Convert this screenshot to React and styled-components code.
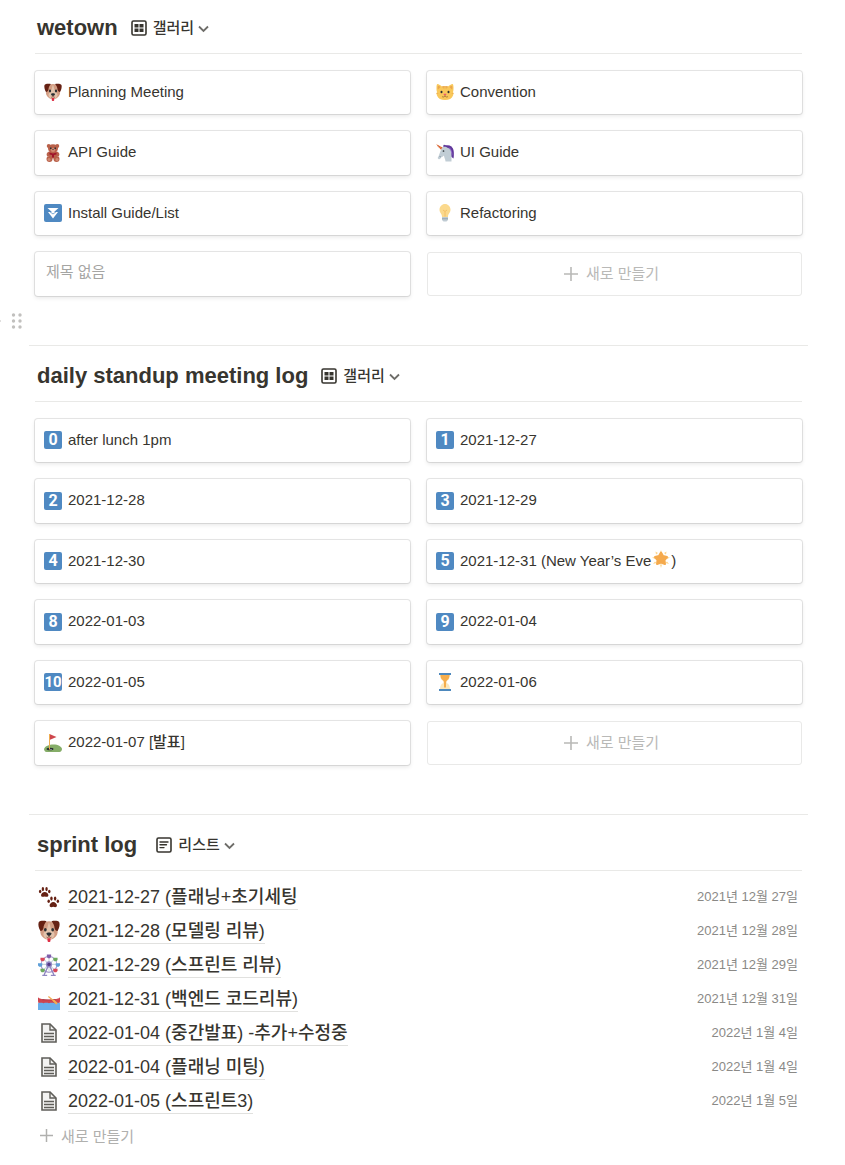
import React from "react";
import styled, { createGlobalStyle } from "styled-components";

const GlobalStyle = createGlobalStyle`
  *, *::before, *::after { box-sizing: border-box; }
  body {
    margin: 0;
    background: #fff;
    color: #37352f;
    font-family: "Liberation Sans", "Noto Sans CJK KR", sans-serif;
    font-size: 15px;
    overflow-x: hidden;
  }
  button { font: inherit; color: inherit; background: none; border: 0; padding: 0; cursor: pointer; }
  a { color: inherit; text-decoration: none; }
  svg { display: block; flex: none; }
`;

const Page = styled.main`
  padding: 0 37px 20px 29px;
`;

const Section = styled.section`
  padding: ${(p) => (p.$first ? "14px" : "16px")} 6px 0;
`;

const Divider = styled.hr`
  height: 1px;
  margin: 0;
  border: 0;
  background: #e9e9e7;
`;

const Header = styled.header`
  display: flex;
  align-items: center;
  gap: 13px;
  padding: 0 2px 11px;
  border-bottom: 1px solid #e9e9e7;
`;

const Title = styled.h2`
  margin: 0;
  font-size: 22px;
  line-height: 28px;
  font-weight: 700;
  white-space: pre;
`;

const ViewButton = styled.button`
  display: flex;
  align-items: center;
  font-weight: 500;
  line-height: 22px;
`;

const ViewName = styled.span`
  margin: 0 4px 0 6px;
`;

const Gallery = styled.div`
  display: grid;
  grid-template-columns: 1fr 1fr;
  grid-auto-rows: minmax(43px, auto) minmax(44px, auto);
  gap: 17px;
  margin-top: 17px;
`;

const Card = styled.a`
  display: flex;
  align-items: center;
  gap: 6px;
  padding: 0 9px 1px;
  border-radius: 3px;
  background: #fff;
  box-shadow: 0 0 0 1px rgba(15, 15, 15, 0.1), 0 2px 4px rgba(15, 15, 15, 0.1);
`;

const CardTitle = styled.span`
  display: flex;
  gap: 1px;
  padding-bottom: 1px;
  line-height: 22px;
  font-weight: 500;
`;

const Untitled = styled(CardTitle)`
  padding: 0 2px 3px;
  color: #a5a5a3;
  font-weight: 400;
`;

const NewCard = styled.button`
  display: flex;
  align-items: center;
  justify-content: center;
  gap: 8px;
  padding-right: 6px;
  border: 1px solid #e9e9e8;
  border-radius: 3px;
  color: #b9b9b7;
  line-height: 22px;
`;

const Keycap = styled.span`
  display: flex;
  justify-content: center;
  flex: none;
  width: 18px;
  height: 18px;
  border-radius: 2px;
  background: #4f89c2;
  color: #fff;
  font-family: Roboto, "Liberation Sans", sans-serif;
  font-size: ${(p) => (p.$wide ? "15px" : "16px")};
  font-weight: 700;
  line-height: 18px;
`;

const BlockGap = styled.div`
  display: flex;
  align-items: center;
  gap: 10px;
  height: 49px;
  margin-left: -38px;
  color: #c1c0be;
`;

const HandleButton = styled.button`
  display: flex;
`;

const List = styled.ul`
  list-style: none;
  margin: 9px 0 0;
  padding: 0;
`;

const ListRow = styled.li`
  display: flex;
  align-items: center;
  gap: 8px;
  height: 34px;
  padding: 0 4px 0 3px;
`;

const ListLink = styled.a`
  font-size: 18px;
  line-height: 24px;
  height: 25px;
  font-weight: 500;
  white-space: nowrap;
  border-bottom: 1px solid #e1e1df;
`;

const ListDate = styled.time`
  margin-left: auto;
  font-size: 13px;
  line-height: 20px;
  color: #8a8986;
  white-space: nowrap;
`;

const NewRow = styled.button`
  display: flex;
  align-items: center;
  gap: 8px;
  height: 34px;
  padding: 0 5px;
  color: #b0b0ae;
`;

const Svg = ({ size = 18, children, ...rest }) => (
  <svg width={size} height={size} viewBox="0 0 36 36" aria-hidden="true" {...rest}>
    {children}
  </svg>
);

const Dog = (p) => (
  <Svg {...p}>
    <path fill="#d29c82" d="M18 2C9 2 5 8 4 16c-1 6 1 10 5 13 2 2 5 3 9 3s7-1 9-3c4-3 6-7 5-13-1-8-5-14-14-14z" />
    <path fill="#e2c3ac" d="M18 4c-1 0-2 8-4 12-2 2-6 5-5 9 1 4 5 7 9 7s8-3 9-7c1-4-3-7-5-9-2-4-3-12-4-12z" />
    <path fill="#662113" d="M14 2C9 1 3 1 1 4c-1 4 0 9 3 14 3 0 4-2 5-5 0-4 2-8 5-11zM22 2c5-1 11-1 13 2 1 4 0 9-3 14-3 0-4-2-5-5 0-4-2-8-5-11z" />
    <ellipse cx="12" cy="16" rx="2.200" ry="2.800" fill="#292f33" />
    <ellipse cx="24" cy="16" rx="2.200" ry="2.800" fill="#292f33" />
    <path fill="#292f33" d="M14 22c0-2 8-2 8 0 0 2-2.500 4-4 4s-4-2-4-4z" />
    <path d="M18 25v3m-4 0c2 1 3 1 4-1 1 2 2 2 4 1" fill="none" stroke="#7b3b2b" strokeWidth="1.200" />
    <path fill="#dd2e44" d="M15.500 30h5v3c0 2-1 3-2.500 3s-2.500-1-2.500-3z" />
  </Svg>
);

const Cat = (p) => (
  <Svg {...p}>
    <path fill="#f9c85b" d="M3 2c-1 0-2 2-2 7 0 4 0 6 1 9-1 2-1 4 0 7 2 6 8 9 16 9s14-3 16-9c1-3 1-5 0-7 1-3 1-5 1-9 0-5-1-7-2-7-2 0-7 3-9 5-3-1-9-1-12 0C10 5 5 2 3 2z" />
    <path fill="#e9a54f" d="M4 6c-1 2-1 5 0 7l5-5C8 7 6 6 4 6zm28 0c1 2 1 5 0 7l-5-5c1-1 3-2 5-2zM16.500 6h3L18 13zM12 7l3 5 1-6zM24 7l-3 5-1-6zM1 20l5 1-5 1zm34 0-5 1 5 1z" />
    <ellipse cx="11" cy="18" rx="2" ry="2.500" fill="#292f33" />
    <ellipse cx="25" cy="18" rx="2" ry="2.500" fill="#292f33" />
    <path fill="#e75a70" d="M15 22c1-1 5-1 6 0 0 1-2 3-3 3s-3-2-3-3z" />
    <path d="M18 25c0 3-4 4-6 2m6-2c0 3 4 4 6 2" fill="none" stroke="#8a5a2c" strokeWidth="1.300" />
  </Svg>
);

const Bear = (p) => (
  <Svg {...p}>
    <g fill="#b9614a">
      <circle cx="9.500" cy="4" r="4" />
      <circle cx="26.500" cy="4" r="4" />
      <ellipse cx="18" cy="9" rx="10" ry="8.500" />
      <path d="M10 15c-4 1-6 5-4 9 1 1 3 1 4 0v5h16v-5c1 1 3 1 4 0 2-4 0-8-4-9z" />
      <circle cx="11" cy="30" r="6" />
      <circle cx="25" cy="30" r="6" />
    </g>
    <g fill="#d08a72">
      <ellipse cx="18" cy="12" rx="4.500" ry="4" />
      <circle cx="10" cy="31" r="3" />
      <circle cx="26" cy="31" r="3" />
    </g>
    <path fill="#a0142a" d="M11 17l7 2 7-2v4l-5 1v5h-4v-5l-5-1z" />
    <path fill="#292f33" d="M12 7h3v3h-3zm9 0h3v3h-3zm-5 3h4l-2 2z" />
  </Svg>
);

const Unicorn = (p) => (
  <Svg {...p}>
    <path fill="#60379a" d="M17 4c8-4 16 0 18 8 1 5 1 11 0 17l-4-3-14-17z" />
    <path fill="#9268ca" d="M26 6c4 3 7 9 7 17l-3-6z" />
    <path fill="#ee7842" d="M0 0l15 8-4 5z" />
    <path d="M4 2v3m3-1-1 3m5-1-2 4" stroke="#b8522e" strokeWidth="1.200" />
    <path fill="#c1cdd5" d="M14 6l2-6 5 6c7 2 10 8 10 17v12H19c0-4-3-8-3-12-2 2-4 3-6 4-1 3-3 4-5 3-2-1-2-3 0-5l4-11c1-4 3-6 5-8z" />
    <path fill="#60379a" d="M15 2c5-1 10 2 11 7-4-3-8-4-11-3z" />
    <circle cx="15" cy="14" r="1.700" fill="#292f33" />
    <path d="M7 25l3 1" stroke="#758795" strokeWidth="1.400" />
  </Svg>
);

const FastDown = (p) => (
  <Svg {...p}>
    <rect width="36" height="36" rx="4" fill="#4f89c2" />
    <path fill="#fff" d="M7 8h22L18 18zM8 16h20L18 29z" />
    <path d="M8 15l3 0 7 5 7-5 3 0" fill="none" stroke="#4f89c2" strokeWidth="1.500" />
  </Svg>
);

const Bulb = (p) => (
  <Svg {...p}>
    <path fill="#fbd98d" d="M29 11C29 5 24 0 18 0S7 5 7 11c0 7 5 8 5 15h12c0-7 5-8 5-15z" />
    <path d="M18 25V15l-4-3m4 3 4-3" fill="none" stroke="#f3bd62" strokeWidth="1.800" />
    <path fill="#bfcbd3" d="M12 26h12v6l-3 3h-6l-3-3z" />
    <path d="M12 29.500h12" stroke="#8899a6" strokeWidth="1.500" />
  </Svg>
);

const GlowStar = (p) => (
  <Svg {...p}>
    <path fill="#fbd58c" d="M18 0l2 6h-4zM29 3l-1 6-4-3zM36 15l-6 3-1-4zM34 28l-7-2 3-3zM18 36l-2-7h4zM2 28l4-5 3 3zM0 15l7-1-1 4zM7 3l5 3-4 3z" />
    <path fill="#f5aa4d" d="M18 5l4 7 8 2-5 6 1 8-8-3-8 3 1-8-5-6 8-2z" stroke="#f5aa4d" strokeWidth="4" strokeLinejoin="round" />
  </Svg>
);

const Hourglass = (p) => (
  <Svg {...p}>
    <path fill="#fbe7ba" d="M21 18c0-2 3.200-3.400 5-6 2-3 2-10 2-10H8s0 7 2 10c1.800 2.600 5 4 5 6s-3.200 3.400-5 6c-2 3-2 10-2 10h20s0-7-2-10c-1.800-2.600-5-4-5-6z" />
    <path fill="#f5ad4c" d="M9 4h18c0 3-1 6-2 8-2 2-5 3.500-5 7v10h-4V19c0-3.500-3-5-5-7-1-2-2-5-2-8z" />
    <path fill="#4d88bd" d="M6 0h24v4H6zM6 32h24v4H6z" />
  </Svg>
);

const Golf = (p) => (
  <Svg {...p}>
    <path fill="#85ad68" d="M0 30c2-6 10-9 19-9s16 4 17 9c0 3-2 6-5 6H5c-3 0-5-3-5-6z" />
    <ellipse cx="12" cy="30" rx="7" ry="2.500" fill="#292f33" />
    <path fill="#ce464c" d="M11 0l14 6-14 6z" />
    <path fill="#efac52" d="M10 0h2v31h-2z" />
    <circle cx="14" cy="31" r="1.200" fill="#e8ecee" />
  </Svg>
);

const Paws = (p) => (
  <Svg {...p}>
    <g fill="#662113">
      <path d="M11 10c3 0 6 3 6 5 0 3-3 3-6 2-3 1-6 1-6-2 0-2 3-5 6-5z" />
      <ellipse cx="3.500" cy="9" rx="2" ry="3" />
      <ellipse cx="8" cy="5" rx="2" ry="3.500" />
      <ellipse cx="14" cy="5" rx="2" ry="3.500" />
      <ellipse cx="18.500" cy="9" rx="2" ry="3" />
      <path d="M25 26c3 0 6 3 6 6s-3 3-6 2c-3 1-6 1-6-2s3-6 6-6z" />
      <ellipse cx="17.500" cy="25" rx="2" ry="3" />
      <ellipse cx="22" cy="20.500" rx="2" ry="3.500" />
      <ellipse cx="28" cy="20.500" rx="2" ry="3.500" />
      <ellipse cx="32.500" cy="25" rx="2" ry="3" />
    </g>
  </Svg>
);

const Ferris = (p) => (
  <Svg {...p}>
    <circle cx="18" cy="17" r="13" fill="none" stroke="#a99bd0" strokeWidth="1.800" />
    <path d="M18 4v26M5 17h26M9 8l18 18M27 8 9 26" stroke="#ccd6dd" strokeWidth="1.800" />
    <path d="M18 17 10 34M18 17l8 17M7 35h8m6 0h8" stroke="#8f86c0" strokeWidth="2.200" />
    <circle cx="18" cy="17" r="5" fill="#9287c4" />
    <circle cx="18" cy="17" r="2.800" fill="#553986" />
    <g fill="#5e9fd8">
      <path d="M0 15h7v4l-2 2H2l-2-2zM29 15h7v4l-2 2h-3l-2-2z" />
    </g>
    <g fill="#8060aa">
      <path d="M14.500 1h7v4l-2 2h-3l-2-2z" />
    </g>
    <g fill="#d84759">
      <path d="M4 6h7v4l-2 2H6l-2-2zM25 24h7v4l-2 2h-3l-2-2z" />
    </g>
    <g fill="#6daa5d">
      <path d="M25 6h7v4l-2 2h-3l-2-2zM4 24h7v4l-2 2H6l-2-2z" />
    </g>
  </Svg>
);

const Canoe = (p) => (
  <Svg {...p}>
    <path fill="#cf454e" d="M0 15c3 3 10 4 18 4s15-1 18-4c1 4 0 8-2 12H2C0 23-1 19 0 15z" />
    <path fill="#a73442" d="M7 18c7 1.500 15 1.500 22 0v2H7z" />
    <path fill="#69aeea" d="M0 25c3-1 6-1 9 0 3-1 6-1 9 0 3-1 6-1 9 0 3-1 6-1 9 0v11H0z" />
    <path d="M17 14l11 9" stroke="#f1ac50" strokeWidth="2" />
    <path d="M26 21l4 4" stroke="#f1ac50" strokeWidth="3.500" strokeLinecap="round" />
  </Svg>
);

const Doc = () => (
  <svg width="22" height="22" viewBox="0 0 22 22" fill="none" stroke="#5f5e59" aria-hidden="true">
    <path d="M4 2h8l6 6v12H4z" fill="#f3f3f2" strokeWidth="1.600" />
    <path d="M12 2v6h6" strokeWidth="1.400" />
    <path d="M6 11.500h10M6 14.500h10M6 17.500h10" strokeWidth="1.300" />
  </svg>
);

const GalleryIcon = () => (
  <svg width="16" height="16" viewBox="0 0 16 16" aria-hidden="true">
    <rect x="1" y="1" width="14" height="14" rx="1.500" fill="none" stroke="#37352f" strokeWidth="1.600" />
    <path fill="#37352f" d="M3.500 4h4v3.500h-4zM8.500 4h4v3.500h-4zM3.500 8.500h4V12h-4zM8.500 8.500h4V12h-4z" />
  </svg>
);

const ListIcon = () => (
  <svg width="16" height="16" viewBox="0 0 16 16" fill="none" stroke="#37352f" aria-hidden="true">
    <rect x="1" y="1" width="14" height="14" rx="1.500" strokeWidth="1.600" />
    <path d="M4 5h8M4 7.800h6.500M4 10.600h4" strokeWidth="1.400" strokeLinecap="round" />
  </svg>
);

const Chevron = () => (
  <svg width="11" height="11" viewBox="0 0 11 11" fill="none" stroke="#6e6d69" aria-hidden="true">
    <path d="M1 3.500l4.500 4.500L10 3.500" strokeWidth="1.800" />
  </svg>
);

const Plus = ({ size = 14 }) => (
  <svg width={size} height={size} viewBox="0 0 14 14" fill="none" stroke="currentColor" aria-hidden="true">
    <path d="M7 0v14M0 7h14" strokeWidth="1.600" />
  </svg>
);

const Grip = () => (
  <svg width="12" height="16" viewBox="0 0 12 16" fill="currentColor" aria-hidden="true">
    {[2, 8, 14].map((y) => (
      <React.Fragment key={y}>
        <circle cx="2.500" cy={y} r="1.700" />
        <circle cx="9" cy={y} r="1.700" />
      </React.Fragment>
    ))}
  </svg>
);

const digit = (label) => <Keycap $wide={label.length > 1}>{label}</Keycap>;

const guides = [
  { icon: <Dog />, title: "Planning Meeting" },
  { icon: <Cat />, title: "Convention" },
  { icon: <Bear />, title: "API Guide" },
  { icon: <Unicorn />, title: "UI Guide" },
  { icon: <FastDown />, title: "Install Guide/List" },
  { icon: <Bulb />, title: "Refactoring" },
  { title: null },
];

const standups = [
  { icon: digit("0"), title: "after lunch 1pm" },
  { icon: digit("1"), title: "2021-12-27" },
  { icon: digit("2"), title: "2021-12-28" },
  { icon: digit("3"), title: "2021-12-29" },
  { icon: digit("4"), title: "2021-12-30" },
  { icon: digit("5"), title: <>2021-12-31 (New Year’s Eve<GlowStar />)</> },
  { icon: digit("8"), title: "2022-01-03" },
  { icon: digit("9"), title: "2022-01-04" },
  { icon: digit("10"), title: "2022-01-05" },
  { icon: <Hourglass />, title: "2022-01-06" },
  { icon: <Golf />, title: "2022-01-07 [발표]" },
];

const sprints = [
  { icon: <Paws size={22} />, title: "2021-12-27 (플래닝+초기세팅", date: "2021년 12월 27일" },
  { icon: <Dog size={22} />, title: "2021-12-28 (모델링 리뷰)", date: "2021년 12월 28일" },
  { icon: <Ferris size={22} />, title: "2021-12-29 (스프린트 리뷰)", date: "2021년 12월 29일" },
  { icon: <Canoe size={22} />, title: "2021-12-31 (백엔드 코드리뷰)", date: "2021년 12월 31일" },
  { icon: <Doc />, title: "2022-01-04 (중간발표) -추가+수정중", date: "2022년 1월 4일" },
  { icon: <Doc />, title: "2022-01-04 (플래닝 미팅)", date: "2022년 1월 4일" },
  { icon: <Doc />, title: "2022-01-05 (스프린트3)", date: "2022년 1월 5일" },
];

function SectionHeader({ title, icon, view }) {
  return (
    <Header>
      <Title>{title}</Title>
      <ViewButton type="button">
        {icon}
        <ViewName>{view}</ViewName>
        <Chevron />
      </ViewButton>
    </Header>
  );
}

function CardGallery({ items }) {
  return (
    <Gallery>
      {items.map((item, i) => (
        <Card href="#" key={i}>
          {item.icon}
          {item.title ? <CardTitle>{item.title}</CardTitle> : <Untitled>제목 없음</Untitled>}
        </Card>
      ))}
      <NewCard type="button">
        <Plus />
        새로 만들기
      </NewCard>
    </Gallery>
  );
}

export default function App() {
  return (
    <>
      <GlobalStyle />
      <Page>
        <Section $first>
          <SectionHeader title="wetown" icon={<GalleryIcon />} view="갤러리" />
          <CardGallery items={guides} />
        </Section>
        <BlockGap>
          <HandleButton type="button" aria-label="블록 추가">
            <Plus size={10} />
          </HandleButton>
          <HandleButton type="button" aria-label="블록 이동">
            <Grip />
          </HandleButton>
        </BlockGap>
        <Divider />
        <Section>
          <SectionHeader title="daily standup meeting log" icon={<GalleryIcon />} view="갤러리" />
          <CardGallery items={standups} />
        </Section>
        <BlockGap />
        <Divider />
        <Section>
          <SectionHeader title="sprint log " icon={<ListIcon />} view="리스트" />
          <List>
            {sprints.map((s) => (
              <ListRow key={s.title}>
                {s.icon}
                <ListLink href="#">{s.title}</ListLink>
                <ListDate>{s.date}</ListDate>
              </ListRow>
            ))}
          </List>
          <NewRow type="button">
            <Plus size={13} />
            새로 만들기
          </NewRow>
        </Section>
      </Page>
    </>
  );
}
